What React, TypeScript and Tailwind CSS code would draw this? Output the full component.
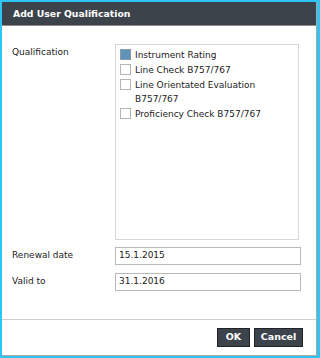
const ITEMS = [
  { label: "Instrument Rating", checked: true },
  { label: "Line Check B757/767", checked: false },
  { label: "Line Orientated Evaluation B757/767", checked: false },
  { label: "Proficiency Check B757/767", checked: false },
];

function Box({ checked }: { checked: boolean }) {
  return (
    <span
      className={
        "mt-[1px] h-[11px] w-[11px] shrink-0 border " +
        (checked ? "border-[#8a9aa8] bg-[#5f94b8]" : "border-[#b5b5b5] bg-white")
      }
    />
  );
}

export default function App() {
  return (
    <div
      className="h-[358px] w-[320px] bg-[#2ec5f5] pb-[2px] pl-[2px] pr-[3px] pt-[2px] text-[9px] text-[#222]"
      style={{ fontFamily: '"DejaVu Sans", "Open Sans", sans-serif' }}
    >
      <div className="flex h-full flex-col border-b border-r border-[#a8a8a8] bg-white">
        <div className="flex h-[24px] items-center border-b border-[#8d8d8d] bg-[#3d434b] pl-[11px] text-[9.3px] font-bold text-white">
          Add User Qualification
        </div>

        <div className="flex flex-1 flex-col px-[10px] pt-[18px]">
          <div className="flex">
            <div className="w-[103px] pt-[2px]">Qualification</div>
            <div className="h-[196px] w-[184px] border border-[#d6d6d6] px-[4px] pt-[3px]">
              {ITEMS.map((it) => (
                <div key={it.label} className="mb-[1px] flex gap-[4px] leading-[14px]">
                  <Box checked={it.checked} />
                  <span className="w-[145px]">{it.label}</span>
                </div>
              ))}
            </div>
          </div>

          <div className="mt-[7px] flex items-center">
            <div className="w-[103px]">Renewal date</div>
            <div className="flex h-[18px] w-[186px] items-center border border-[#b9b9b9] px-[3px]">
              15.1.2015
            </div>
          </div>
          <div className="mt-[8px] flex items-center">
            <div className="w-[103px]">Valid to</div>
            <div className="flex h-[18px] w-[186px] items-center border border-[#b9b9b9] px-[3px]">
              31.1.2016
            </div>
          </div>
        </div>

        <div className="flex h-[36px] items-center justify-end gap-[4px] border-t border-[#cfcfcf] pr-[13px]">
          <button className="h-[19px] w-[33px] border border-[#1f2328] bg-[#3d434b] text-[9.5px] font-bold text-white">
            OK
          </button>
          <button className="h-[19px] w-[49px] border border-[#1f2328] bg-[#3d434b] text-[9.5px] font-bold text-white">
            Cancel
          </button>
        </div>
      </div>
    </div>
  );
}
